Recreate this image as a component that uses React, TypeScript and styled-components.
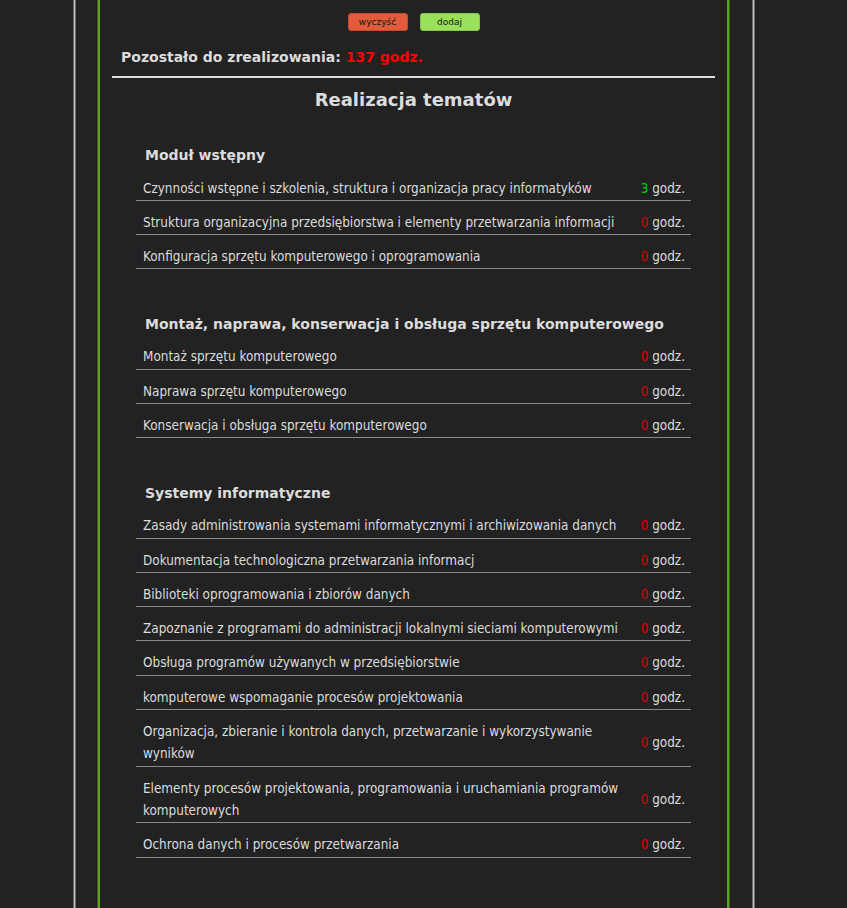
import React from "react";
import styled, { createGlobalStyle } from "styled-components";

const Global = createGlobalStyle`
  html, body { margin: 0; padding: 0; background: #222222; }
  body { font-family: "DejaVu Sans", Verdana, sans-serif; color: #dcdcdc; }
  *, *::before, *::after { box-sizing: border-box; }
`;

const Page = styled.div`
  display: flex;
  justify-content: center;
  padding-right: 19px;
  min-height: 100vh;
`;

const OuterFrame = styled.div`
  width: 680px;
  padding: 0 24px 0 23px;
  border-left: 1px solid #c4c4c4;
  border-right: 1px solid #c4c4c4;
  box-shadow: -1px 0 0 #6a6a6a, 1px 0 0 #6a6a6a, inset 1px 0 0 #6a6a6a, inset -1px 0 0 #6a6a6a;
  display: flex;
`;

const InnerFrame = styled.div`
  flex: 1;
  border-left: 2px solid #5da41c;
  border-right: 2px solid #5da41c;
  box-shadow: -1px 0 0 #3b5e1a, 1px 0 0 #3b5e1a;
  padding: 13px 12px 40px;
  display: flex;
  flex-direction: column;
`;

const ButtonRow = styled.div`
  display: flex;
  justify-content: center;
  gap: 12px;
`;

const Btn = styled.button<{ $tone: "red" | "green" }>`
  width: 60px;
  height: 18px;
  padding: 0;
  border: 1px solid ${(p) => (p.$tone === "red" ? "#c44a2e" : "#86c64a")};
  border-radius: 3px;
  background: ${(p) => (p.$tone === "red" ? "#e35b3b" : "#9ae05a")};
  color: #141414;
  font-family: "DejaVu Sans", Verdana, sans-serif;
  font-size: 9px;
  line-height: 16px;
  cursor: pointer;
`;

const Remaining = styled.div`
  margin: 14px 0 0 9px;
  font-size: 14px;
  font-weight: bold;
  color: #dcdcdc;
  line-height: 24px;
`;

const Red = styled.span`
  color: #ff0000;
`;

const Rule = styled.hr`
  margin: 7px 0 0;
  border: none;
  height: 2px;
  background: #dedede;
`;

const Title = styled.h1`
  margin: 10px 0 0;
  text-align: center;
  font-size: 18px;
  font-weight: bold;
  line-height: 24px;
  color: #dcdcdc;
`;

const Section = styled.section`
  width: 555px;
  align-self: center;
  margin: 33px 0 11.5px;
`;

const SectionTitle = styled.h2`
  margin: 0 0 1.5px 9px;
  font-size: 14px;
  font-weight: bold;
  line-height: 20px;
  color: #dcdcdc;
`;

const Row = styled.div`
  display: flex;
  align-items: center;
  border-bottom: 1px solid #8a8a8a;
  padding: 11px 6px 0 7px;
  font-family: "DejaVu Sans Condensed", "DejaVu Sans", Tahoma, sans-serif;
  font-size: 13.4px;
  line-height: 22.3px;
  color: #dcdcdc;
`;

const RowLabel = styled.div`
  flex: 1;
  padding-right: 20px;
`;

const Hours = styled.div`
  white-space: nowrap;
`;

const Num = styled.span<{ $done: boolean }>`
  color: ${(p) => (p.$done ? "#00d000" : "#e00000")};
`;

type Topic = { name: string; hours: number };
type Module = { title: string; topics: Topic[] };

const modules: Module[] = [
  {
    title: "Moduł wstępny",
    topics: [
      { name: "Czynności wstępne i szkolenia, struktura i organizacja pracy informatyków", hours: 3 },
      { name: "Struktura organizacyjna przedsiębiorstwa i elementy przetwarzania informacji", hours: 0 },
      { name: "Konfiguracja sprzętu komputerowego i oprogramowania", hours: 0 },
    ],
  },
  {
    title: "Montaż, naprawa, konserwacja i obsługa sprzętu komputerowego",
    topics: [
      { name: "Montaż sprzętu komputerowego", hours: 0 },
      { name: "Naprawa sprzętu komputerowego", hours: 0 },
      { name: "Konserwacja i obsługa sprzętu komputerowego", hours: 0 },
    ],
  },
  {
    title: "Systemy informatyczne",
    topics: [
      { name: "Zasady administrowania systemami informatycznymi i archiwizowania danych", hours: 0 },
      { name: "Dokumentacja technologiczna przetwarzania informacj", hours: 0 },
      { name: "Biblioteki oprogramowania i zbiorów danych", hours: 0 },
      { name: "Zapoznanie z programami do administracji lokalnymi sieciami komputerowymi", hours: 0 },
      { name: "Obsługa programów używanych w przedsiębiorstwie", hours: 0 },
      { name: "komputerowe wspomaganie procesów projektowania", hours: 0 },
      { name: "Organizacja, zbieranie i kontrola danych, przetwarzanie i wykorzystywanie wyników", hours: 0 },
      { name: "Elementy procesów projektowania, programowania i uruchamiania programów komputerowych", hours: 0 },
      { name: "Ochrona danych i procesów przetwarzania", hours: 0 },
    ],
  },
];

export default function App() {
  return (
    <>
      <Global />
      <Page>
        <OuterFrame>
          <InnerFrame>
            <ButtonRow>
              <Btn $tone="red">wyczyść</Btn>
              <Btn $tone="green">dodaj</Btn>
            </ButtonRow>
            <Remaining>
              Pozostało do zrealizowania: <Red>137 godz.</Red>
            </Remaining>
            <Rule />
            <Title>Realizacja tematów</Title>
            {modules.map((m) => (
              <Section key={m.title}>
                <SectionTitle>{m.title}</SectionTitle>
                {m.topics.map((t) => (
                  <Row key={t.name}>
                    <RowLabel>{t.name}</RowLabel>
                    <Hours>
                      <Num $done={t.hours > 0}>{t.hours}</Num> godz.
                    </Hours>
                  </Row>
                ))}
              </Section>
            ))}
          </InnerFrame>
        </OuterFrame>
      </Page>
    </>
  );
}
